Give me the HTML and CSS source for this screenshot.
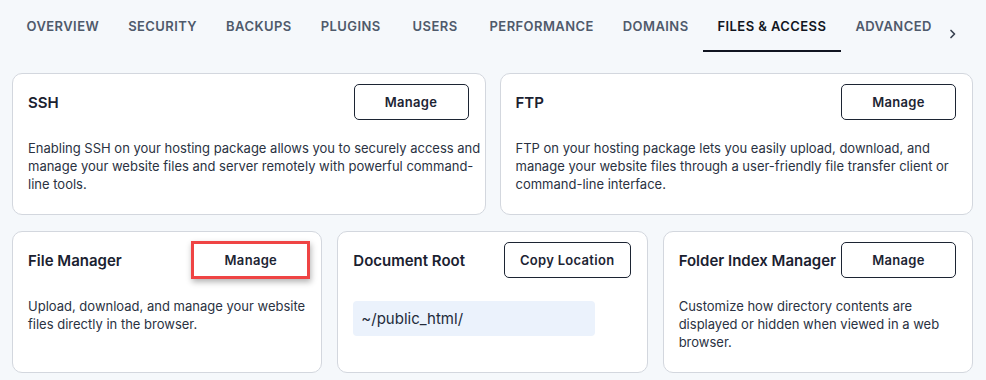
FILE: index.html
```html
<!DOCTYPE html>
<html lang="en">
  <head>
    <title>Files &amp; Access</title>
    <link rel="stylesheet" href="styles.css">
  </head>

  <body>
    <div class="Page">
      <!-- Tabs -->
      <nav class="Tabs">
        <a class="tab">Overview</a>
        <a class="tab">Security</a>
        <a class="tab">Backups</a>
        <a class="tab">Plugins</a>
        <a class="tab">Users</a>
        <a class="tab">Performance</a>
        <a class="tab">Domains</a>
        <a class="tab active">Files &amp; Access</a>
        <a class="tab">Advanced</a>
        <span class="more">
          <svg width="8" height="10" viewBox="0 0 8 10">
            <path d="M2 1.5 L5.5 5 L2 8.5" fill="none" stroke="#3a4352" stroke-width="1.7" stroke-linecap="round" stroke-linejoin="round" />
          </svg>
        </span>
      </nav>

      <!-- Top row -->
      <div class="Row two">
        <div class="Card">
          <div class="head">
            <h4>SSH</h4>
            <button>Manage</button>
          </div>
          <p>
            Enabling SSH on your hosting package allows you to securely access and
            manage your website files and server remotely with powerful command-line tools.
          </p>
        </div>
        <div class="Card">
          <div class="head">
            <h4>FTP</h4>
            <button>Manage</button>
          </div>
          <p>
            FTP on your hosting package lets you easily upload, download, and
            manage your website files through a user-friendly file transfer client or
            command-line interface.
          </p>
        </div>
      </div>

      <!-- Bottom row -->
      <div class="Row three">
        <div class="Card">
          <div class="head">
            <h4>File Manager</h4>
            <button class="marked">Manage</button>
          </div>
          <p>Upload, download, and manage your website files directly in the browser.</p>
        </div>
        <div class="Card">
          <div class="head">
            <h4>Document Root</h4>
            <button class="wide">Copy Location</button>
          </div>
          <div class="path">~/public_html/</div>
        </div>
        <div class="Card">
          <div class="head">
            <h4>Folder Index Manager</h4>
            <button>Manage</button>
          </div>
          <p>
            Customize how directory contents are displayed or hidden when viewed in a
            web browser.
          </p>
        </div>
      </div>
    </div>
  </body>
</html>
```

FILE: styles.css
```css
body {
  margin: 0;
  background-color: #f5f8fb;
  font-family: "Inter", "Noto Sans", sans-serif;
  color: #1e2636;
}

.Page {
  padding: 0 13px 0 12px;
}

.Tabs {
  display: flex;
  align-items: flex-start;
  height: 52px;
  margin-bottom: 21px;
}

.Tabs .tab {
  min-width: 80px;
  box-sizing: border-box;
  padding: 17px 14.5px 15px;
  text-align: center;
  font-size: 13px;
  line-height: 18px;
  font-weight: 600;
  letter-spacing: 0.42px;
  text-transform: uppercase;
  color: #4f5a6b;
  white-space: nowrap;
}

.Tabs .tab.active {
  color: #111521;
  border-bottom: 2px solid #111521;
}

.Tabs .more {
  padding: 23px 0 0 3px;
}

.Row {
  display: grid;
  margin-bottom: 16px;
}

.Row.two {
  grid-template-columns: 1fr 1fr;
  gap: 14px;
}

.Row.three {
  grid-template-columns: 1fr 1fr 1fr;
  gap: 15px;
}

.Card {
  background-color: white;
  border: 1px solid #d3d7de;
  border-radius: 10px;
  padding: 10px 16px 21px 15px;
}

.Card .head {
  display: flex;
  justify-content: space-between;
  align-items: center;
}

.Card h4 {
  margin: 0;
  font-size: 15px;
  font-weight: 600;
  color: #1a2130;
}

.Card button {
  width: 115px;
  height: 36px;
  border: 1px solid #1c2433;
  border-radius: 5px;
  background-color: white;
  font-family: inherit;
  font-size: 13px;
  font-weight: 600;
  letter-spacing: 0.3px;
  color: #1c2433;
}

.Card button.wide {
  width: 127px;
}

/* highlighted button */
.Card button.marked {
  width: 119px;
  height: 38px;
  margin: -1px -5px -1px 0;
  border: 3px solid #ef4444;
  border-radius: 0;
  box-shadow: 1px 3px 6px rgba(0, 0, 0, 0.3);
}

.Card p {
  margin: 19px -12px 0 0;
  font-size: 13px;
  line-height: 18px;
  color: #2a3242;
}

.Card .path {
  width: 242px;
  height: 35px;
  box-sizing: border-box;
  margin-top: 23px;
  padding: 0 8px;
  border-radius: 4px;
  background-color: #ebf2fc;
  font-size: 15px;
  line-height: 35px;
  color: #232b3a;
}
```
